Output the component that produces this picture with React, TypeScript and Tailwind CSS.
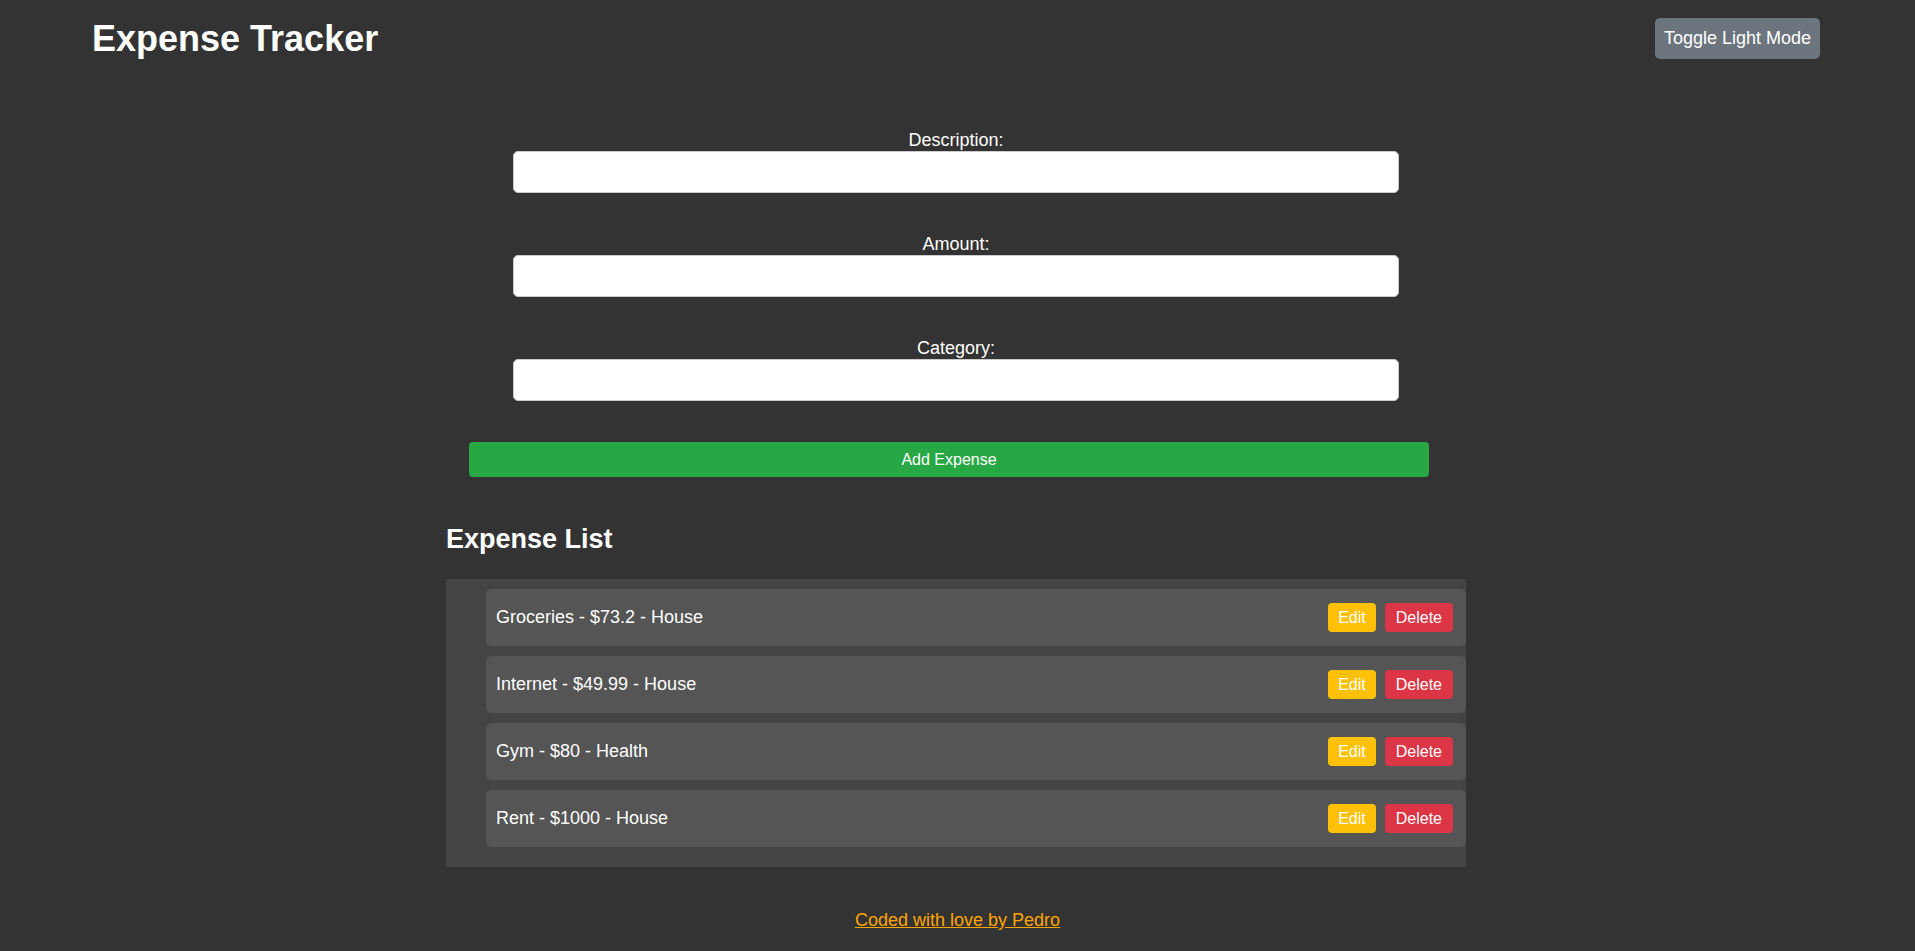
import React from "react";

const expenses = [
  { id: 1, description: "Groceries", amount: 73.2, category: "House" },
  { id: 2, description: "Internet", amount: 49.99, category: "House" },
  { id: 3, description: "Gym", amount: 80, category: "Health" },
  { id: 4, description: "Rent", amount: 1000, category: "House" },
];

const fields = ["Description", "Amount", "Category"];

export default function App() {
  return (
    <div className="min-h-screen w-full bg-[#333333] text-white font-['Liberation_Sans',Arial,sans-serif] text-[18px]">
      <header className="h-[76px] flex items-center justify-between pl-[92px] pr-[95px]">
        <h1 className="text-[36px] font-bold leading-[41px]">Expense Tracker</h1>
        <button className="h-[41px] px-[9px] rounded-[5px] bg-[#6c757d] text-white text-[18px] leading-[21px]">
          Toggle Light Mode
        </button>
      </header>

      <main className="w-[1020px] ml-[446px] mt-[54px]">
        <form className="flex flex-col" onSubmit={(e) => e.preventDefault()}>
          {fields.map((f, i) => (
            <div
              key={f}
              className={i === 0 ? "flex flex-col items-center" : "flex flex-col items-center mt-[41px]"}
            >
              <label className="block leading-[21px] text-center">{f}:</label>
              <input
                type="text"
                className="w-[886px] h-[42px] bg-white border border-[#cccccc] rounded-[5px] text-black px-[10px] outline-none"
              />
            </div>
          ))}
          <button
            type="submit"
            className="mt-[41px] ml-[23px] w-[960px] h-[35px] rounded-[4px] bg-[#28a745] text-white text-[16px]"
          >
            Add Expense
          </button>
        </form>

        <h2 className="mt-[47px] text-[27px] font-bold leading-[31px]">Expense List</h2>

        <ul className="mt-[24px] bg-[#444444] pl-[40px] pt-[10px] pb-[20px] flex flex-col gap-[10px]">
          {expenses.map((e) => (
            <li
              key={e.id}
              className="h-[57px] bg-[#555555] rounded-[5px] flex items-center justify-between pl-[10px] pr-[13px]"
            >
              <span className="leading-[21px]">
                {e.description} - ${e.amount} - {e.category}
              </span>
              <div className="flex items-center gap-[9px]">
                <button className="h-[29px] px-[10px] rounded-[4px] bg-[#ffc107] text-white text-[16px]">
                  Edit
                </button>
                <button className="h-[29px] px-[11px] rounded-[4px] bg-[#dc3545] text-white text-[16px]">
                  Delete
                </button>
              </div>
            </li>
          ))}
        </ul>
      </main>

      <footer className="mt-[43px] pb-[20px] text-center leading-[21px]">
        <a href="#" className="text-[#ffa500] underline">
          Coded with love by Pedro
        </a>
      </footer>
    </div>
  );
}
